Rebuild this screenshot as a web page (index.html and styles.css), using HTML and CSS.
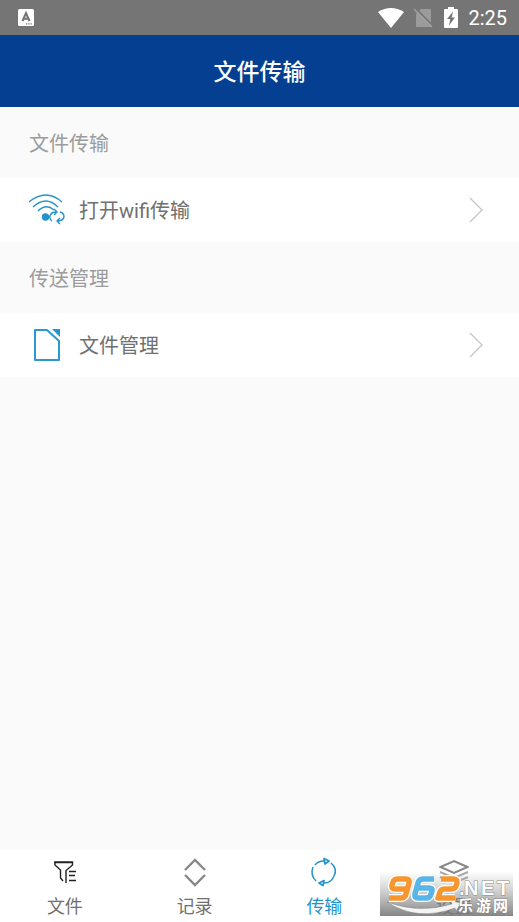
FILE: index.html
```html
<!DOCTYPE html>
<html lang="zh-CN">
<head>
<meta charset="utf-8">
<meta name="viewport" content="width=device-width, initial-scale=1">
<title>文件传输</title>
<link rel="stylesheet" href="styles.css">
</head>
<body>
<div class="app">
  <div class="status">
    <svg class="status-app" width="16" height="17" viewBox="0 0 16 17" aria-hidden="true">
      <rect width="16" height="17" rx="1.5" fill="#fff"/>
      <path d="M4.500 12 8 4 11.500 12M5.500 9.800h5" fill="none" stroke="#757575" stroke-width="2.100"/>
      <path d="M8 14.800h6" stroke="#757575" stroke-width="1.200" stroke-dasharray="1.300 1"/>
    </svg>
    <div class="status-right">
      <svg width="26" height="20" viewBox="0 0 26 20" aria-hidden="true"><path d="M0 4Q13-4 26 4L13 20Z" fill="#fff"/></svg>
      <svg width="20" height="20" viewBox="0 0 20 20" aria-hidden="true">
        <path d="M7 1h9q1 0 1 1v17H2V6Z" fill="#9b9b9b"/>
        <path d="M1 0 19 18" stroke="#757575" stroke-width="2"/>
        <path d="M0 1 18 19" stroke="#a3a3a3" stroke-width="1.500"/>
      </svg>
      <svg width="14" height="21" viewBox="0 0 14 21" aria-hidden="true">
        <path d="M4 0h6v2h3q1 0 1 1v17q0 1-1 1H1q-1 0-1-1V3q0-1 1-1h3Z" fill="#fff"/>
        <path d="M9 4.500 3 12h3.300L5 18.500 11 10.500H7.700Z" fill="#757575"/>
      </svg>
      <time class="clock">2:25</time>
    </div>
  </div>
  <header class="header"><h1 class="title">文件传输</h1></header>
  <main class="content">
    <h2 class="group">文件传输</h2>
    <button class="row" type="button">
      <svg width="38" height="32" viewBox="0 0 38 32" fill="none" stroke="#2493cd" stroke-width="1.400" aria-hidden="true">
        <path d="M0 8Q17-6 33 8M4 13Q17 1 29 13M9 17Q17 9 25 16"/>
        <circle cx="16.500" cy="23" r="3.700" fill="#2493cd" stroke="none"/>
        <path d="M23 27Q19 24 22 20Q23 18 27 18M25 15l3 3-3 3M31 18Q35 19 35 23Q34 27 28 27M31 24l-3 3 3 3"/>
      </svg>
      <span class="row-label">打开wifi传输</span>
      <svg class="arrow" width="14" height="26" viewBox="0 0 14 26" fill="none" stroke="#c4c4c4" stroke-width="1.300" aria-hidden="true"><path d="M1 1 13 13 1 25"/></svg>
    </button>
    <h2 class="group">传送管理</h2>
    <button class="row" type="button">
      <svg width="38" height="32" viewBox="0 0 38 32" aria-hidden="true">
        <path d="M6 1H18L30 12V31H6Z" fill="none" stroke="#2d98cf" stroke-width="2" stroke-linejoin="round"/>
        <path d="M23 0h8v8Z" fill="#2493cd"/>
      </svg>
      <span class="row-label">文件管理</span>
      <svg class="arrow" width="14" height="26" viewBox="0 0 14 26" fill="none" stroke="#c4c4c4" stroke-width="1.300" aria-hidden="true"><path d="M1 1 13 13 1 25"/></svg>
    </button>
  </main>
  <nav class="tabs">
    <a class="tab" href="#files">
      <svg width="30" height="30" viewBox="0 0 30 30" fill="none" stroke="#222" stroke-width="1.400" aria-hidden="true">
        <path d="M13 24 10.500 21V13L5 8V5H22.500V8L16 13.500V26M4 5.500H23"/>
        <path d="M19 14.500h7M19 18.500h6M19 23.500h7"/>
      </svg>
      <span>文件</span>
    </a>
    <a class="tab" href="#records">
      <svg width="30" height="30" viewBox="0 0 30 30" fill="none" stroke="#888" stroke-width="2.400" aria-hidden="true"><path d="M5 13 15 3 25 13M5 18 15 28 25 18"/></svg>
      <span>记录</span>
    </a>
    <a class="tab active" href="#transfer" aria-current="page">
      <svg width="30" height="30" viewBox="0 0 30 30" fill="none" stroke="#2493cd" stroke-width="1.500" aria-hidden="true">
        <path d="M6 8Q9 4 15 4M4 10Q1 18 7 24M22 6Q29 12 25 19Q22 26 15 26"/>
        <path d="M15 1.500 20 4 16 7ZM15 23.500 10 26 14 28.500Z" stroke-width="1.700" stroke-linejoin="round"/>
      </svg>
      <span>传输</span>
    </a>
    <a class="tab" href="#settings">
      <svg width="30" height="30" viewBox="0 0 30 30" fill="none" stroke="#888" stroke-width="2" aria-hidden="true">
        <path d="M1.500 10 15 4 28.500 10 15 16Z"/>
        <path d="M1 15 15 21 29 15M1 20 15 26 29 20" stroke="#aaa"/>
      </svg>
      <span>设置</span>
    </a>
  </nav>
  <div class="watermark">
    <svg width="133" height="45" viewBox="0 0 133 45" role="img" aria-label="962.NET 乐游网">
      <defs>
        <linearGradient id="shade" x2="0" y2="1"><stop stop-color="#999" stop-opacity="0"/><stop offset="1" stop-color="#777" stop-opacity=".9"/></linearGradient>
      </defs>
      <rect width="133" height="45" fill="url(#shade)"/>
      <path d="M7 31Q39 43 72 33L71 30L81 32L76 40L75 37Q37 51 7 31Z" fill="#f4f4f4" stroke="#888" stroke-width=".5"/>
      <g fill="none" stroke-linejoin="round">
        <g stroke="#fff" stroke-width="8">
          <path d="M27 18H15Q11 18 12 14L13 11Q14 8 18 8H26Q30 8 29 12L26 23Q25 27 21 27H9"/>
          <path d="M54 8H43Q39 8 38 12L35 23Q34 27 38 27H46Q50 27 51 23L52 20Q53 17 49 17H37"/>
          <path d="M61 8H73Q78 8 77 12L76 15Q75 18 71 18H65Q61 18 60 21L58 27H75"/>
        </g>
        <g stroke-width="5.500">
          <path stroke="#f7962e" d="M27 18H15Q11 18 12 14L13 11Q14 8 18 8H26Q30 8 29 12L26 23Q25 27 21 27H9"/>
          <path stroke="#58b5e8" d="M54 8H43Q39 8 38 12L35 23Q34 27 38 27H46Q50 27 51 23L52 20Q53 17 49 17H37"/>
          <path stroke="#f7962e" d="M61 8H73Q78 8 77 12L76 15Q75 18 71 18H65Q61 18 60 21L58 27H75"/>
        </g>
      </g>
      <text class="mark-net" x="79" y="24">.</text>
      <text class="mark-net" x="84" y="24">N</text>
      <text class="mark-net" x="101" y="24">E</text>
      <text class="mark-net" x="117" y="24">T</text>
      <text class="mark-cn" x="78" y="40">乐</text>
      <text class="mark-cn" x="96" y="40">游</text>
      <text class="mark-cn" x="113" y="40">网</text>
    </svg>
  </div>
</div>
</body>
</html>
```
FILE: styles.css
```css
* { box-sizing: border-box; }

body {
  margin: 0;
  background: #fafafa;
  color: #707070;
  font-family: "Noto Sans CJK SC", sans-serif;
}

.app {
  position: relative;
  display: flex;
  flex-direction: column;
  min-height: 100vh;
}

.status {
  display: flex;
  align-items: center;
  justify-content: space-between;
  height: 35px;
  padding: 0 12px 0 18px;
  background: #757575;
}

.status-right {
  display: flex;
  align-items: center;
  gap: 10px;
}

.clock {
  color: #fff;
  font-family: Roboto, sans-serif;
  font-size: 20px;
  line-height: 24px;
}

.header {
  display: flex;
  align-items: center;
  justify-content: center;
  height: 72px;
  padding-bottom: 2px;
  background: #053f91;
}

.title {
  margin: 0;
  color: #fff;
  font-size: 23px;
  font-weight: 500;
  line-height: 32px;
}

.content { flex: 1; }

.group {
  margin: 0;
  padding: 20px 29px;
  color: #9c9c9c;
  font-size: 20px;
  font-weight: 400;
  line-height: 31px;
}

.row {
  display: flex;
  align-items: center;
  gap: 12px;
  width: 100%;
  padding: 16px 36px 16px 29px;
  border: 0;
  background: #fff;
  color: #707070;
  font: inherit;
  font-size: 20px;
  line-height: 30px;
  text-align: left;
}

.row-label {
  flex: 1;
  padding-top: 2px;
  font-family: Roboto, "Noto Sans CJK SC", sans-serif;
}

.tabs {
  display: flex;
  background: #fff;
}

.tab {
  display: flex;
  flex: 1;
  flex-direction: column;
  align-items: center;
  gap: 5px;
  padding: 7px 0 4px;
  color: #707070;
  font-size: 18px;
  line-height: 26px;
  text-decoration: none;
}

.tab.active { color: #2493cd; }

.watermark {
  position: absolute;
  right: 6px;
  bottom: 6px;
  height: 45px;
  pointer-events: none;
}

.watermark svg { display: block; }

.mark-net,
.mark-cn {
  fill: #fff;
  stroke: #888;
  stroke-width: 1px;
  paint-order: stroke;
  font-weight: 700;
}

.mark-net {
  font-family: "Liberation Sans", sans-serif;
  font-size: 20px;
}

.mark-cn {
  font-family: "Noto Sans CJK SC", sans-serif;
  font-size: 15px;
}
```
